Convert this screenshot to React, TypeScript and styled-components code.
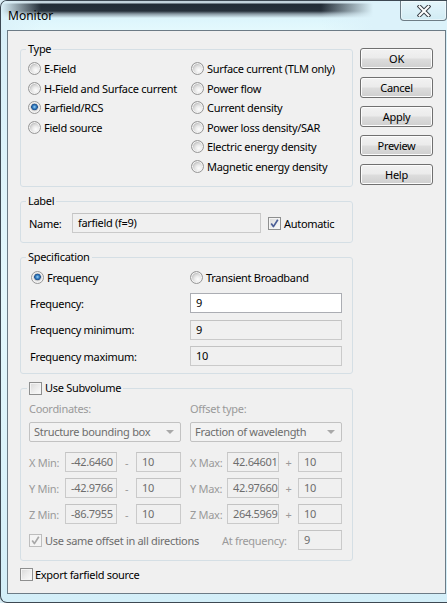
import React from 'react';
import styled, { createGlobalStyle } from 'styled-components';

const GlobalStyle = createGlobalStyle`
  html, body {
    margin: 0;
    padding: 0;
    background: #dbeef6;
  }
  body {
    font-family: "Noto Sans", "DejaVu Sans", sans-serif;
    font-size: 11px;
    letter-spacing: -0.3px;
    color: #000;
  }
  * {
    box-sizing: border-box;
  }
`;

const typeLeft = ['E-Field', 'H-Field and Surface current', 'Farfield/RCS', 'Field source'];
const typeRight = [
  'Surface current (TLM only)',
  'Power flow',
  'Current density',
  'Power loss density/SAR',
  'Electric energy density',
  'Magnetic energy density',
];

const coords = [
  { axis: 'X', min: '-42.6460', max: '42.64601' },
  { axis: 'Y', min: '-42.9766', max: '42.97660' },
  { axis: 'Z', min: '-86.7955', max: '264.5969' },
];

const Radio = ({ checked }: { checked?: boolean }) => <RadioDot $checked={checked} />;

const Check = ({ checked, disabled }: { checked?: boolean; disabled?: boolean }) => (
  <CheckBox $disabled={disabled}>
    {checked && (
      <svg width="11" height="11" viewBox="0 0 11 11">
        <path
          d="M2.2 5.6 L4.4 8.6 L8.8 1.8"
          fill="none"
          stroke={disabled ? '#a8a8a8' : '#4b5e96'}
          strokeWidth="1.7"
          strokeLinejoin="round"
        />
      </svg>
    )}
  </CheckBox>
);

const App = () => {
  return (
    <>
      <GlobalStyle />
      <Window>
        <TitleBar>
          <Title>Monitor</Title>
          <CloseButton>
            <svg width="14" height="12" viewBox="0 0 14 12">
              <path
                d="M2.5 1.5 L11.5 10.5 M11.5 1.5 L2.5 10.5"
                stroke="#3a4048"
                strokeWidth="4"
                strokeLinecap="square"
              />
              <path
                d="M2.5 1.5 L11.5 10.5 M11.5 1.5 L2.5 10.5"
                stroke="#fff"
                strokeWidth="2"
                strokeLinecap="square"
              />
            </svg>
          </CloseButton>
        </TitleBar>

        <Content>
          <LeftColumn>
            <Group $pad={[3, 0, 10, 7]}>
              <Legend>Type</Legend>
              <TypeGrid>
                <RadioColumn $width={163}>
                  {typeLeft.map((t) => (
                    <RadioRow key={t}>
                      <Radio checked={t === 'Farfield/RCS'} />
                      <span>{t}</span>
                    </RadioRow>
                  ))}
                </RadioColumn>
                <RadioColumn>
                  {typeRight.map((t) => (
                    <RadioRow key={t}>
                      <Radio />
                      <span>{t}</span>
                    </RadioRow>
                  ))}
                </RadioColumn>
              </TypeGrid>
            </Group>

            <Group $pad={[5, 8, 9, 8]}>
              <Legend>Label</Legend>
              <NameRow>
                <FieldLabel $width={43}>Name:</FieldLabel>
                <TextBox $width={189}>farfield (f=9)</TextBox>
                <CheckLabel $gap={3} $left={7}>
                  <Check checked />
                  <span>Automatic</span>
                </CheckLabel>
              </NameRow>
            </Group>

            <Group $pad={[4, 8, 7, 9]}>
              <Legend>Specification</Legend>
              <SpecRadios>
                <RadioRow $width={159}>
                  <Radio checked />
                  <span>Frequency</span>
                </RadioRow>
                <RadioRow>
                  <Radio />
                  <span>Transient Broadband</span>
                </RadioRow>
              </SpecRadios>
              <SpecFields>
                <NameRow>
                  <FieldLabel $width={160}>Frequency:</FieldLabel>
                  <TextBox $width={152} $white>9</TextBox>
                </NameRow>
                <NameRow>
                  <FieldLabel $width={160}>Frequency minimum:</FieldLabel>
                  <TextBox $width={152}>9</TextBox>
                </NameRow>
                <NameRow>
                  <FieldLabel $width={160}>Frequency maximum:</FieldLabel>
                  <TextBox $width={152}>10</TextBox>
                </NameRow>
              </SpecFields>
            </Group>

            <Group $pad={[7, 10, 10, 8]} $legendShift={1}>
              <Legend>
                <CheckLabel $gap={3}>
                  <Check />
                  <span>Use Subvolume</span>
                </CheckLabel>
              </Legend>
              <PairGrid>
                <Muted>Coordinates:</Muted>
                <Muted>Offset type:</Muted>
              </PairGrid>
              <PairGrid $top={6}>
                <Combo>
                  <span>Structure bounding box</span>
                  <Arrow />
                </Combo>
                <Combo>
                  <span>Fraction of wavelength</span>
                  <Arrow />
                </Combo>
              </PairGrid>
              <CoordList>
                {coords.map((c) => (
                  <CoordRow key={c.axis}>
                    <Muted>{c.axis} Min:</Muted>
                    <TextBox $disabled>{c.min}</TextBox>
                    <Sign>-</Sign>
                    <TextBox $disabled>10</TextBox>
                    <MaxLabel>{c.axis} Max:</MaxLabel>
                    <TextBox $disabled>{c.max}</TextBox>
                    <Sign>+</Sign>
                    <TextBox $disabled>10</TextBox>
                  </CoordRow>
                ))}
                <OffsetRow>
                  <CheckLabel $gap={3} $muted>
                    <Check checked disabled />
                    <span>Use same offset in all directions</span>
                  </CheckLabel>
                  <Muted>At frequency:</Muted>
                  <TextBox $disabled>9</TextBox>
                </OffsetRow>
              </CoordList>
            </Group>

            <ExportRow>
              <CheckLabel $gap={2}>
                <Check />
                <span>Export farfield source</span>
              </CheckLabel>
            </ExportRow>
          </LeftColumn>

          <ButtonColumn>
            <Button>OK</Button>
            <Button>Cancel</Button>
            <Button>Apply</Button>
            <Button>Preview</Button>
            <Button>Help</Button>
          </ButtonColumn>
        </Content>
      </Window>
    </>
  );
};

const Window = styled.div`
  width: 447px;
  height: 603px;
  border: 1px solid #3d4852;
  border-right: none;
  border-radius: 7px 0 0 7px;
  background: linear-gradient(180deg, #d6eef8 0%, #e3f7fc 50%, #d3eef8 100%);
  padding: 0 1px 8px 6px;
  display: flex;
  flex-direction: column;
  overflow: hidden;
`;

const TitleBar = styled.div`
  height: 29px;
  margin: 0 -1px 0 -6px;
  padding-left: 7px;
  display: flex;
  align-items: flex-start;
  background:
    linear-gradient(90deg, #dcf2fa 0px, rgba(220, 242, 250, 0) 40px,
      rgba(220, 242, 250, 0) 320px, #dcf2fa 372px),
    linear-gradient(180deg, #c3d3dc 0px, #c3d3dc 2px, #222c36 3px, #27313b 10px,
      #8a9aa4 13px, #dcf5fc 17px, #e4f9fd 100%);
`;

const Title = styled.div`
  margin-top: 7px;
  font-size: 12px;
  line-height: 16px;
  letter-spacing: 0;
  color: #000;
`;

const CloseButton = styled.div`
  margin-left: auto;
  width: 47px;
  height: 20px;
  border: 1px solid rgba(70, 85, 95, 0.75);
  border-top: none;
  border-radius: 0 0 4px 4px;
  background: linear-gradient(180deg, rgba(255, 255, 255, 0.25), rgba(200, 230, 240, 0.55));
  box-shadow: inset 0 0 0 1px rgba(255, 255, 255, 0.45);
  display: flex;
  align-items: center;
  justify-content: center;
`;

const Content = styled.div`
  height: 564px;
  border: 1px solid #6c7b86;
  background: #f0f0f0;
  padding: 11px 12px 0 12px;
  display: flex;
  gap: 7px;
`;

const LeftColumn = styled.div`
  width: 333px;
  display: flex;
  flex-direction: column;
  gap: 7px;
`;

const ButtonColumn = styled.div`
  width: 73px;
  margin-top: 6px;
  display: flex;
  flex-direction: column;
  gap: 8px;
`;

const Button = styled.button`
  width: 73px;
  height: 21px;
  padding: 0;
  font-family: inherit;
  font-size: 11px;
  letter-spacing: -0.3px;
  color: #000;
  border: 1px solid #707070;
  border-radius: 3px;
  background: linear-gradient(180deg, #f2f2f2 0%, #ebebeb 48%, #dddddd 52%, #cfcfcf 100%);
  box-shadow: inset 0 0 0 1px #fcfcfc;
`;

const Legend = styled.legend`
  padding: 0 2px;
  line-height: 14px;
  height: 14px;
  display: flex;
  align-items: center;
`;

/* legend sits inside the fieldset padding, so pull it back to 5px from the border */
const Group = styled.fieldset<{ $pad: number[]; $legendShift?: number }>`
  margin: 0;
  min-width: 0;
  padding: ${(p) => p.$pad.map((v) => `${v}px`).join(' ')};
  border: 1px solid #d5dfe5;
  border-radius: 3px;

  & > ${Legend} {
    margin-left: ${(p) => 5 + (p.$legendShift ?? 0) - p.$pad[3]}px;
  }
`;

const TypeGrid = styled.div`
  display: flex;
`;

const RadioColumn = styled.div<{ $width?: number }>`
  width: ${(p) => (p.$width ? `${p.$width}px` : 'auto')};
  display: flex;
  flex-direction: column;
`;

const RadioRow = styled.label<{ $width?: number }>`
  width: ${(p) => (p.$width ? `${p.$width}px` : 'auto')};
  height: 19.5px;
  display: flex;
  align-items: center;
  gap: 3px;
  white-space: nowrap;
`;

const RadioDot = styled.span<{ $checked?: boolean }>`
  width: 13px;
  height: 13px;
  flex: none;
  border-radius: 50%;
  border: 1px solid #979797;
  background: ${(p) =>
    p.$checked
      ? 'radial-gradient(circle at 50% 45%, #9fd3f5 0px, #3b86c8 1.6px, #1c4f8e 3px, #c9c9c9 3.6px, #e9e9e9 4.6px, #f6f6f6 6px)'
      : 'radial-gradient(circle at 62% 66%, #fdfdfd 0px, #ececec 3px, #d3d3d3 5.5px, #c4c4c4 6px)'};
  box-shadow: inset 0 0 0 1px #f3f3f3;
`;

const CheckBox = styled.span<{ $disabled?: boolean }>`
  width: 13px;
  height: 13px;
  flex: none;
  border: 1px solid ${(p) => (p.$disabled ? '#bdbdbd' : '#8e8f8f')};
  background: ${(p) =>
    p.$disabled
      ? '#f4f4f4'
      : 'linear-gradient(135deg, #d8d8d8 0%, #ececec 50%, #fbfbfb 100%)'};
  box-shadow: inset 0 0 0 1px #f4f4f4;
  display: flex;
  align-items: center;
  justify-content: center;
`;

const CheckLabel = styled.label<{ $gap: number; $muted?: boolean; $left?: number }>`
  margin-left: ${(p) => p.$left ?? 0}px;
  display: flex;
  align-items: center;
  gap: ${(p) => p.$gap}px;
  white-space: nowrap;
  color: ${(p) => (p.$muted ? '#6d6d6d' : '#000')};
`;

const NameRow = styled.div`
  height: 20px;
  display: flex;
  align-items: center;
`;

const FieldLabel = styled.span<{ $width: number }>`
  width: ${(p) => p.$width}px;
  flex: none;
`;

const TextBox = styled.div<{ $width?: number; $white?: boolean; $disabled?: boolean }>`
  width: ${(p) => (p.$width ? `${p.$width}px` : 'auto')};
  height: 20px;
  flex: none;
  padding-left: 5px;
  line-height: 18px;
  white-space: nowrap;
  overflow: hidden;
  border: 1px solid ${(p) => (p.$white ? '#abadb3' : '#cacaca')};
  border-top-color: ${(p) => (p.$white ? '#abadb3' : '#c3c3c3')};
  background: ${(p) => (p.$white ? '#fff' : '#f0f0f0')};
  color: ${(p) => (p.$disabled ? '#6d6d6d' : '#000')};
`;

const SpecRadios = styled.div`
  height: 18px;
  margin-left: 1px;
  display: flex;
  align-items: center;
`;

const SpecFields = styled.div`
  margin-top: 7px;
  display: flex;
  flex-direction: column;
  gap: 6.5px;
`;

const Muted = styled.span`
  color: #9a9a9a;
  white-space: nowrap;
`;

const MaxLabel = styled(Muted)`
  padding-left: 9px;
`;

const PairGrid = styled.div<{ $top?: number }>`
  margin-top: ${(p) => p.$top ?? 0}px;
  display: grid;
  grid-template-columns: 152px 152px;
  column-gap: 9px;
  line-height: 14px;
`;

const Combo = styled.div`
  height: 20px;
  padding: 0 6px 0 4px;
  border: 1px solid #c2c2c2;
  border-radius: 2px;
  background: #f2f2f2;
  color: #6d6d6d;
  display: flex;
  align-items: center;
  justify-content: space-between;
  white-space: nowrap;
`;

const Arrow = styled.span`
  width: 0;
  height: 0;
  border-left: 4px solid transparent;
  border-right: 4px solid transparent;
  border-top: 4px solid #a9a9a9;
`;

const CoordList = styled.div`
  margin-top: 10px;
  display: flex;
  flex-direction: column;
  gap: 6px;
`;

const CoordRow = styled.div`
  height: 20px;
  display: grid;
  grid-template-columns: 36px 52px 19px 45px 46px 52px 19px 44px;
  align-items: center;
`;

const Sign = styled.span`
  color: #9a9a9a;
  text-align: center;
`;

const OffsetRow = styled.div`
  height: 20px;
  display: grid;
  grid-template-columns: 1fr 76px 44px;
  align-items: center;
`;

const ExportRow = styled.div`
  height: 14px;
  margin-top: -1px;
  display: flex;
  align-items: center;
`;

export default App;
